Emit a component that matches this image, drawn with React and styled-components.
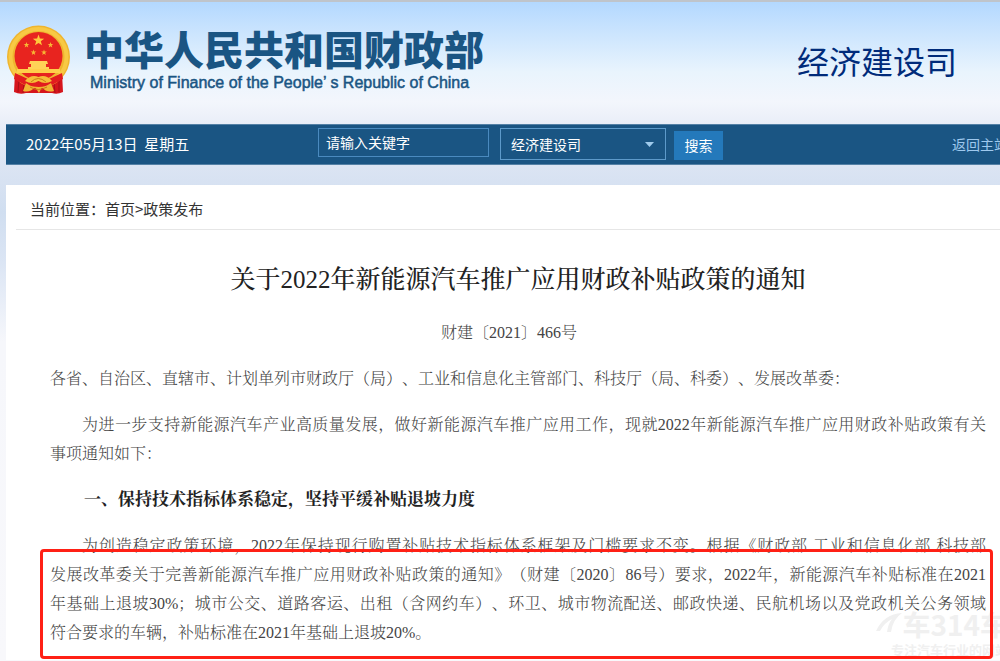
import React, { useState } from 'react';
import styled, { createGlobalStyle } from 'styled-components';

const GlobalStyle = createGlobalStyle`
  * {
    box-sizing: border-box;
  }

  body {
    margin: 0;
    font-family: 'Noto Sans CJK SC', sans-serif;
    font-size: 14px;
    color: #333;
    text-spacing-trim: space-all;
  }
`;

const Page = styled.div`
  position: relative;
  min-height: 100vh;
  padding-left: 6px;
  overflow: hidden;
  border-top: 2px solid #bfc4cb;
  background: linear-gradient(
    180deg,
    #b3d8ff 0,
    #cce5fe 32px,
    #e9f4fd 70px,
    #f3f6fc 100px,
    #e9eef8 122px,
    #dbe4f3 165px,
    #d0def0 210px,
    #dbe5f4 260px,
    #f6f7fb 340px,
    #f8f8fb 100%
  );
`;

const Header = styled.header`
  display: flex;
  align-items: center;
  justify-content: space-between;
  height: 122px;
  padding: 0 43px 6px 0;
`;

const Brand = styled.a`
  display: flex;
  align-items: center;
  gap: 12px;
  color: #1a5583;
  text-decoration: none;
`;

const BrandName = styled.span`
  display: block;
  font-size: 40px;
  font-weight: 900;
  line-height: 44px;
`;

const BrandEnglish = styled.span`
  display: block;
  margin-top: 2px;
  padding-left: 6px;
  font-family: 'Liberation Sans', Arial, sans-serif;
  font-size: 16px;
  line-height: 22px;
  -webkit-text-stroke: 0.5px #1a5583;
`;

const Department = styled.h2`
  margin: 0;
  color: #002b7a;
  font-size: 32px;
  font-weight: 400;
  line-height: 40px;
`;

const Toolbar = styled.div`
  display: flex;
  align-items: center;
  height: 41px;
  padding: 0 0 2px 20px;
  overflow: hidden;
  border: 1px solid #5481a6;
  border-width: 1px 0;
  background: #1a5583;
  white-space: nowrap;
`;

const Today = styled.span`
  width: 292px;
  flex: none;
  color: #fff;
  font-size: 15px;
  white-space: pre;
`;

const SearchForm = styled.form`
  display: flex;
  align-items: flex-end;
  gap: 8px;
`;

const Keyword = styled.input`
  width: 171px;
  height: 29px;
  margin: 0 3px 3px 0;
  padding: 0 7px;
  border: 1px solid #4a8abf;
  border-radius: 0;
  background: transparent;
  color: #fff;
  font: inherit;
  outline: none;

  &::placeholder {
    color: #fff;
    opacity: 1;
  }
`;

const SelectBox = styled.span`
  position: relative;
  display: flex;
`;

const Select = styled.select`
  width: 166px;
  height: 32px;
  padding: 0 10px;
  appearance: none;
  border: 1px solid #5d9aca;
  border-radius: 0;
  background: transparent;
  color: #fff;
  font: inherit;
`;

const Arrow = styled.svg`
  position: absolute;
  top: 14px;
  right: 12px;
  width: 9px;
  height: 5px;
  pointer-events: none;
`;

const SearchButton = styled.button`
  width: 49px;
  height: 29px;
  padding: 0;
  border: 0;
  background: #2479bb;
  color: #fff;
  font: inherit;
`;

const HomeLink = styled.a`
  flex: none;
  margin: 0 -8px 0 auto;
  color: #9fc9ee;
  text-decoration: none;
`;

const Panel = styled.main`
  margin-top: 20px;
  padding-left: 10px;
  background: #fff;
`;

const Breadcrumb = styled.nav`
  height: 45px;
  padding: 4px 14px 0;
  border-bottom: 1px solid #e6e6e6;
  font-size: 15px;
  line-height: 40px;

  a {
    color: #333;
    text-decoration: none;
  }
`;

const Article = styled.article`
  padding: 30px 14px 13px 34px;
  color: #444;
  font-family: 'Liberation Serif', 'Noto Serif CJK SC', SimSun, 'Noto Sans CJK SC', serif;
  font-size: 16px;
  font-weight: 300;
  line-height: 29px;
`;

const Title = styled.h1`
  margin: 0 0 18px;
  color: #222;
  font-size: 25px;
  font-weight: 500;
  line-height: 40px;
  text-align: center;
`;

const DocNumber = styled.p`
  margin: 0 0 17px;
  padding-right: 18px;
  text-align: center;
`;

const Paragraph = styled.p`
  margin: 0 0 17px;

  &:last-child {
    margin-bottom: 0;
  }
`;

const Line = styled.span`
  display: block;
  padding-left: ${(props) => (props.$indent ? '2em' : '0')};
  text-align-last: ${(props) => (props.$full ? 'justify' : 'left')};
  white-space: nowrap;
`;

const SectionTitle = styled.h3`
  margin: 0 0 17px;
  padding-left: 2em;
  color: #222;
  font-size: 17px;
  font-weight: 700;
`;

const Marked = styled.span`
  position: relative;
  z-index: 1;
  display: block;

  &::after {
    content: '';
    position: absolute;
    inset: -11px -7px -12px -10px;
    border: 3px solid #ff2015;
    border-radius: 4px;
  }
`;

const Watermark = styled.div`
  position: absolute;
  right: -8px;
  bottom: 2px;
  display: flex;
  flex-direction: column;
  align-items: flex-end;
  color: #f0f0f0;
  font-size: 13px;
  font-weight: 700;
  line-height: 18px;
  white-space: nowrap;
`;

const WatermarkName = styled.span`
  display: flex;
  align-items: center;
  font-size: 28px;
  line-height: 34px;
`;

const starPoints = (cx, cy, r) =>
  Array.from({ length: 10 }, (_, i) => {
    const radius = i % 2 ? r * 0.4 : r;
    const angle = (Math.PI / 5) * i - Math.PI / 2;
    return `${cx + radius * Math.cos(angle)},${cy + radius * Math.sin(angle)}`;
  }).join(' ');

const Emblem = () => (
  <svg width="66" height="70" viewBox="0 0 66 70" aria-hidden="true">
    <path d="M9 48 L56 48 L57 67 Q51 70 46 68 L20 68 Q14 70 8 67 Z" fill="#d6151c" />
    <path d="M13 54 L12 67 M18 58 L17 68 M53 54 L53 67 M48 58 L49 68" stroke="#a90f16" strokeWidth="1" />
    <circle cx="32.5" cy="32" r="31.5" fill="#efb52f" />
    <circle cx="32.5" cy="32" r="28" fill="none" stroke="#f8c944" strokeWidth="4" />
    <circle cx="32.5" cy="31" r="24" fill="#e8241f" />
    <polygon points={starPoints(32.5, 15.5, 6)} fill="#ffc93c" />
    <polygon points={starPoints(20.5, 20, 3)} fill="#f7b934" />
    <polygon points={starPoints(44.5, 20, 3)} fill="#f7b934" />
    <polygon points={starPoints(27.5, 27.5, 3)} fill="#f7b934" />
    <polygon points={starPoints(38, 27.5, 3)} fill="#f7b934" />
    <path d="M24 36 h17 l1 3 h-2 v3 h3 v2 H22 v-2 h3 v-3 h-2 Z" fill="#ffd257" />
    <path d="M11 44 H54 V48 H11 Z" fill="#ffce4a" />
    <path d="M9 48 L22 54 Q32 45 43 54 L56 48 L57 54 L46 60 Q33 64 19 60 L8 54 Z" fill="#e21c1f" />
    <path d="M19 56 Q25 49 32.5 52 Q40 49 46 56 Q39 60 32.5 56 Q26 60 19 56 Z" fill="#f6bd38" />
    <path d="M20 58 Q32 67 45 58 L48 66 Q40 68 36 62 L33 68 L29 62 Q24 68 17 66 Z" fill="#f1b434" />
    <path d="M25 57 Q32 50 40 57 M24 62 Q32 67 41 62" fill="none" stroke="#cc7b16" strokeWidth="1" />
  </svg>
);

const App = () => {
  const [keyword, setKeyword] = useState('');

  return (
    <>
      <GlobalStyle />
      <Page>
        <Header>
          <Brand href="#">
            <Emblem />
            <span>
              <BrandName>中华人民共和国财政部</BrandName>
              <BrandEnglish>Ministry of Finance of the People’ s Republic of China</BrandEnglish>
            </span>
          </Brand>
          <Department>经济建设司</Department>
        </Header>

        <Toolbar>
          <Today>2022年05月13日  星期五</Today>
          <SearchForm onSubmit={(e) => e.preventDefault()}>
            <Keyword
              type="text"
              aria-label="关键字"
              placeholder="请输入关键字"
              value={keyword}
              onChange={(e) => setKeyword(e.target.value)}
            />
            <SelectBox>
              <Select aria-label="搜索范围">
                <option>经济建设司</option>
              </Select>
              <Arrow viewBox="0 0 9 5">
                <path d="M0 0 H9 L4.5 5 Z" fill="#9fcbec" />
              </Arrow>
            </SelectBox>
            <SearchButton type="submit">搜索</SearchButton>
          </SearchForm>
          <HomeLink href="#">返回主站</HomeLink>
        </Toolbar>

        <Panel>
          <Breadcrumb>
            当前位置：<a href="#">首页</a>&gt;<a href="#">政策发布</a>
          </Breadcrumb>

          <Article>
            <Title>关于2022年新能源汽车推广应用财政补贴政策的通知</Title>
            <DocNumber>财建〔2021〕466号</DocNumber>
            <Paragraph>
              <Line>各省、自治区、直辖市、计划单列市财政厅（局）、工业和信息化主管部门、科技厅（局、科委）、发展改革委：</Line>
            </Paragraph>
            <Paragraph>
              <Line $indent $full>为进一步支持新能源汽车产业高质量发展，做好新能源汽车推广应用工作，现就2022年新能源汽车推广应用财政补贴政策有关</Line>
              <Line>事项通知如下：</Line>
            </Paragraph>
            <SectionTitle>一、保持技术指标体系稳定，坚持平缓补贴退坡力度</SectionTitle>
            <Paragraph>
              <Line $indent $full>为创造稳定政策环境，2022年保持现行购置补贴技术指标体系框架及门槛要求不变。根据《财政部 工业和信息化部 科技部</Line>
              <Marked>
                <Line $full>发展改革委关于完善新能源汽车推广应用财政补贴政策的通知》（财建〔2020〕86号）要求，2022年，新能源汽车补贴标准在2021</Line>
                <Line $full>年基础上退坡30%；城市公交、道路客运、出租（含网约车）、环卫、城市物流配送、邮政快递、民航机场以及党政机关公务领域</Line>
                <Line>符合要求的车辆，补贴标准在2021年基础上退坡20%。</Line>
              </Marked>
            </Paragraph>
          </Article>
        </Panel>

        <Watermark aria-hidden="true">
          <WatermarkName>
            <svg width="26" height="24" viewBox="0 0 26 24">
              <path d="M0 19 Q8 2 26 1 Q17 7 15 20 L11 20 Q12 12 16 7 Q8 11 4 19 Z" fill="#f0f0f0" />
            </svg>
            车314车
          </WatermarkName>
          <span>专注汽车行业的网站</span>
        </Watermark>
      </Page>
    </>
  );
};

export default App;
